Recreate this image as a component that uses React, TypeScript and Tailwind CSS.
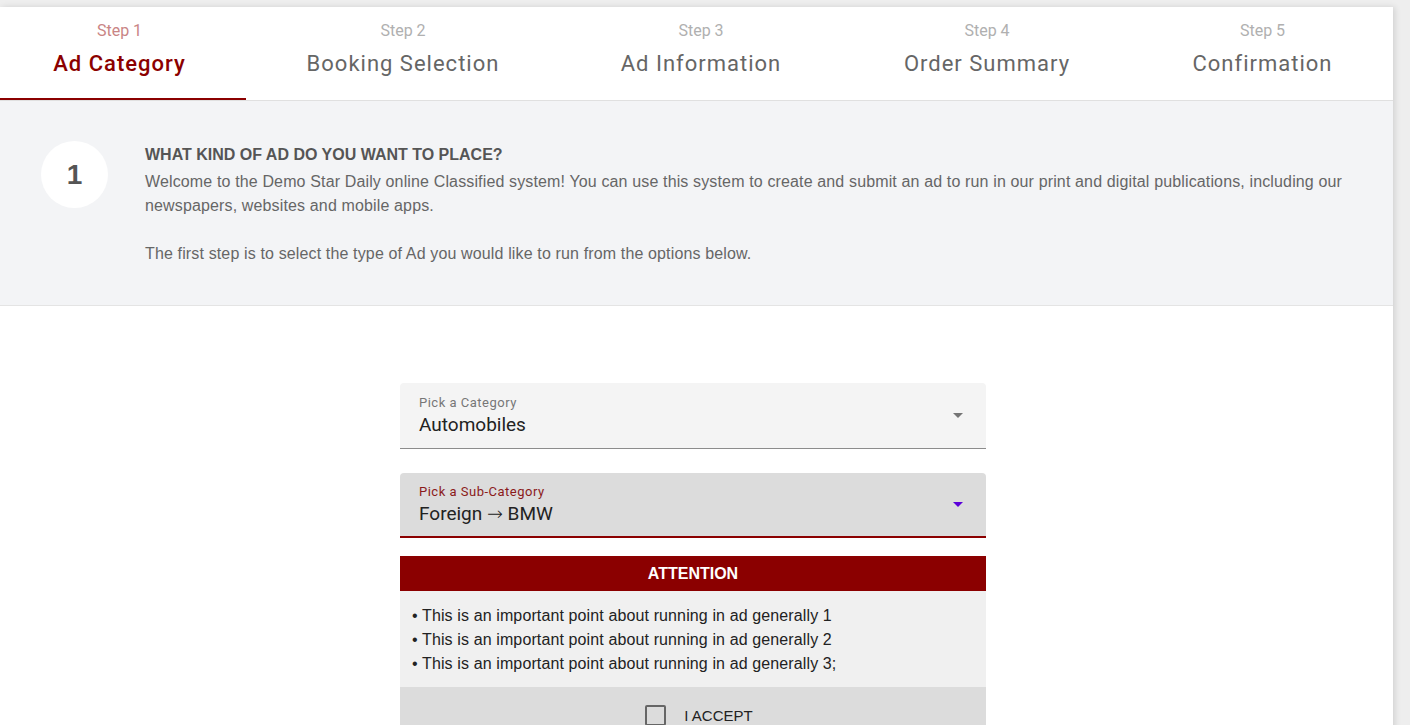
import { useState } from "react"

const steps = [
    { step: "Step 1", title: "Ad Category", width: "w-[246px] pr-[7px]" },
    { step: "Step 2", title: "Booking Selection", width: "w-[314px]" },
    { step: "Step 3", title: "Ad Information", width: "w-[282px]" },
    { step: "Step 4", title: "Order Summary", width: "w-[290px]" },
    { step: "Step 5", title: "Confirmation", width: "w-[261px]" },
]

const points = [
    "This is an important point about running in ad generally 1",
    "This is an important point about running in ad generally 2",
    "This is an important point about running in ad generally 3;",
]

function Caret({ color }: { color: string }) {
    return (
        <svg width="10" height="5" viewBox="0 0 10 5" className={color}>
            <path d="M0 0 L5 5 L10 0 Z" fill="currentColor" />
        </svg>
    )
}

export default function App() {
    const [accepted, setAccepted] = useState(false)

    return (
        <div className="min-h-screen bg-[#eeeeee] pt-[7px] font-['Roboto',sans-serif]">
            <div className="w-[1393px] min-h-[718px] bg-white shadow-[2px_0_6px_rgba(0,0,0,0.12)]">
                {/* Stepper tabs */}
                <div className="flex border-b border-[#e0e0e0]">
                    {steps.map((s, i) => (
                        <div
                            key={s.step}
                            className={`${s.width} h-[93px] flex flex-col items-center pt-[15px] ${i === 0 ? "border-b-2 border-[#8b0000] -mb-px" : ""}`}
                        >
                            <span className={`text-[16px] leading-[18px] ${i === 0 ? "text-[#c98585]" : "text-[#b0b0b0]"}`}>
                                {s.step}
                            </span>
                            <span className={`mt-[11px] text-[22px] leading-[26px] tracking-[1px] ${i === 0 ? "text-[#8b0000] font-medium" : "text-[#666666]"}`}>
                                {s.title}
                            </span>
                        </div>
                    ))}
                </div>

                {/* Intro */}
                <div className="flex bg-[#f3f4f6] border-b border-[#e4e4e4] h-[205px] pt-[40px] pl-[41px] pr-[36px] font-['Liberation_Sans',Arial,sans-serif]">
                    <div className="w-[67px] h-[67px] shrink-0 rounded-full bg-white flex items-center justify-center text-[28px] font-bold text-[#555555]">
                        1
                    </div>
                    <div className="ml-[37px] text-[16px] leading-[24px] text-[#666666] tracking-[0.14px]">
                        <h2 className="font-bold text-[#555555] mt-[2px] tracking-normal">WHAT KIND OF AD DO YOU WANT TO PLACE?</h2>
                        <p className="mt-[3px]">
                            Welcome to the Demo Star Daily online Classified system! You can use this system to create and submit an ad to run in our print and digital publications, including our newspapers, websites and mobile apps.
                        </p>
                        <p className="mt-[24px]">
                            The first step is to select the type of Ad you would like to run from the options below.
                        </p>
                    </div>
                </div>

                {/* Form */}
                <div className="ml-[400px] w-[586px] pt-[77px]">
                    <div className="h-[66px] bg-[#f4f4f4] rounded-t-[4px] border-b border-[#8c8c8c] flex items-center justify-between pl-[19px] pr-[23px]">
                        <div className="flex flex-col">
                            <span className="text-[13px] leading-[16px] tracking-[0.5px] text-[#777777]">Pick a Category</span>
                            <span className="text-[19px] leading-[24px] text-[#222222] mt-[2px]">Automobiles</span>
                        </div>
                        <Caret color="text-[#757575]" />
                    </div>

                    <div className="mt-[24px] h-[65px] bg-[#dcdcdc] rounded-t-[4px] border-b-2 border-[#8b0000] flex items-center justify-between pl-[19px] pr-[23px]">
                        <div className="flex flex-col">
                            <span className="text-[13px] leading-[16px] tracking-[0.5px] text-[#8b1a1a]">Pick a Sub-Category</span>
                            <span className="text-[19px] leading-[24px] text-[#222222] mt-[1px]">
                                Foreign <span className="font-['DejaVu_Sans',sans-serif] font-extralight">→</span> BMW
                            </span>
                        </div>
                        <Caret color="text-[#5b00d9]" />
                    </div>

                    <div className="mt-[18px] font-['Liberation_Sans',Arial,sans-serif]">
                        <div className="h-[35px] bg-[#8b0000] flex items-center justify-center text-white font-bold text-[16px]">
                            ATTENTION
                        </div>
                        <ul className="bg-[#f0f0f0] pt-[13px] pb-[11px] px-[12px] text-[16px] leading-[24px] text-[#222222] tracking-[0.12px]">
                            {points.map((p) => (
                                <li key={p}>• {p}</li>
                            ))}
                        </ul>
                        <div className="bg-[#dcdcdc] h-[60px] flex justify-center pt-[18px]">
                            <label className="ml-[12px] flex items-start gap-[18px] cursor-pointer">
                                <input
                                    type="checkbox"
                                    checked={accepted}
                                    onChange={(e) => setAccepted(e.target.checked)}
                                    className="appearance-none w-[21px] h-[21px] border-2 border-[#666666] rounded-[2px] bg-transparent"
                                />
                                <span className="text-[15px] leading-[20px] text-[#222222] mt-[1px]">I ACCEPT</span>
                            </label>
                        </div>
                    </div>
                </div>
            </div>
        </div>
    )
}
